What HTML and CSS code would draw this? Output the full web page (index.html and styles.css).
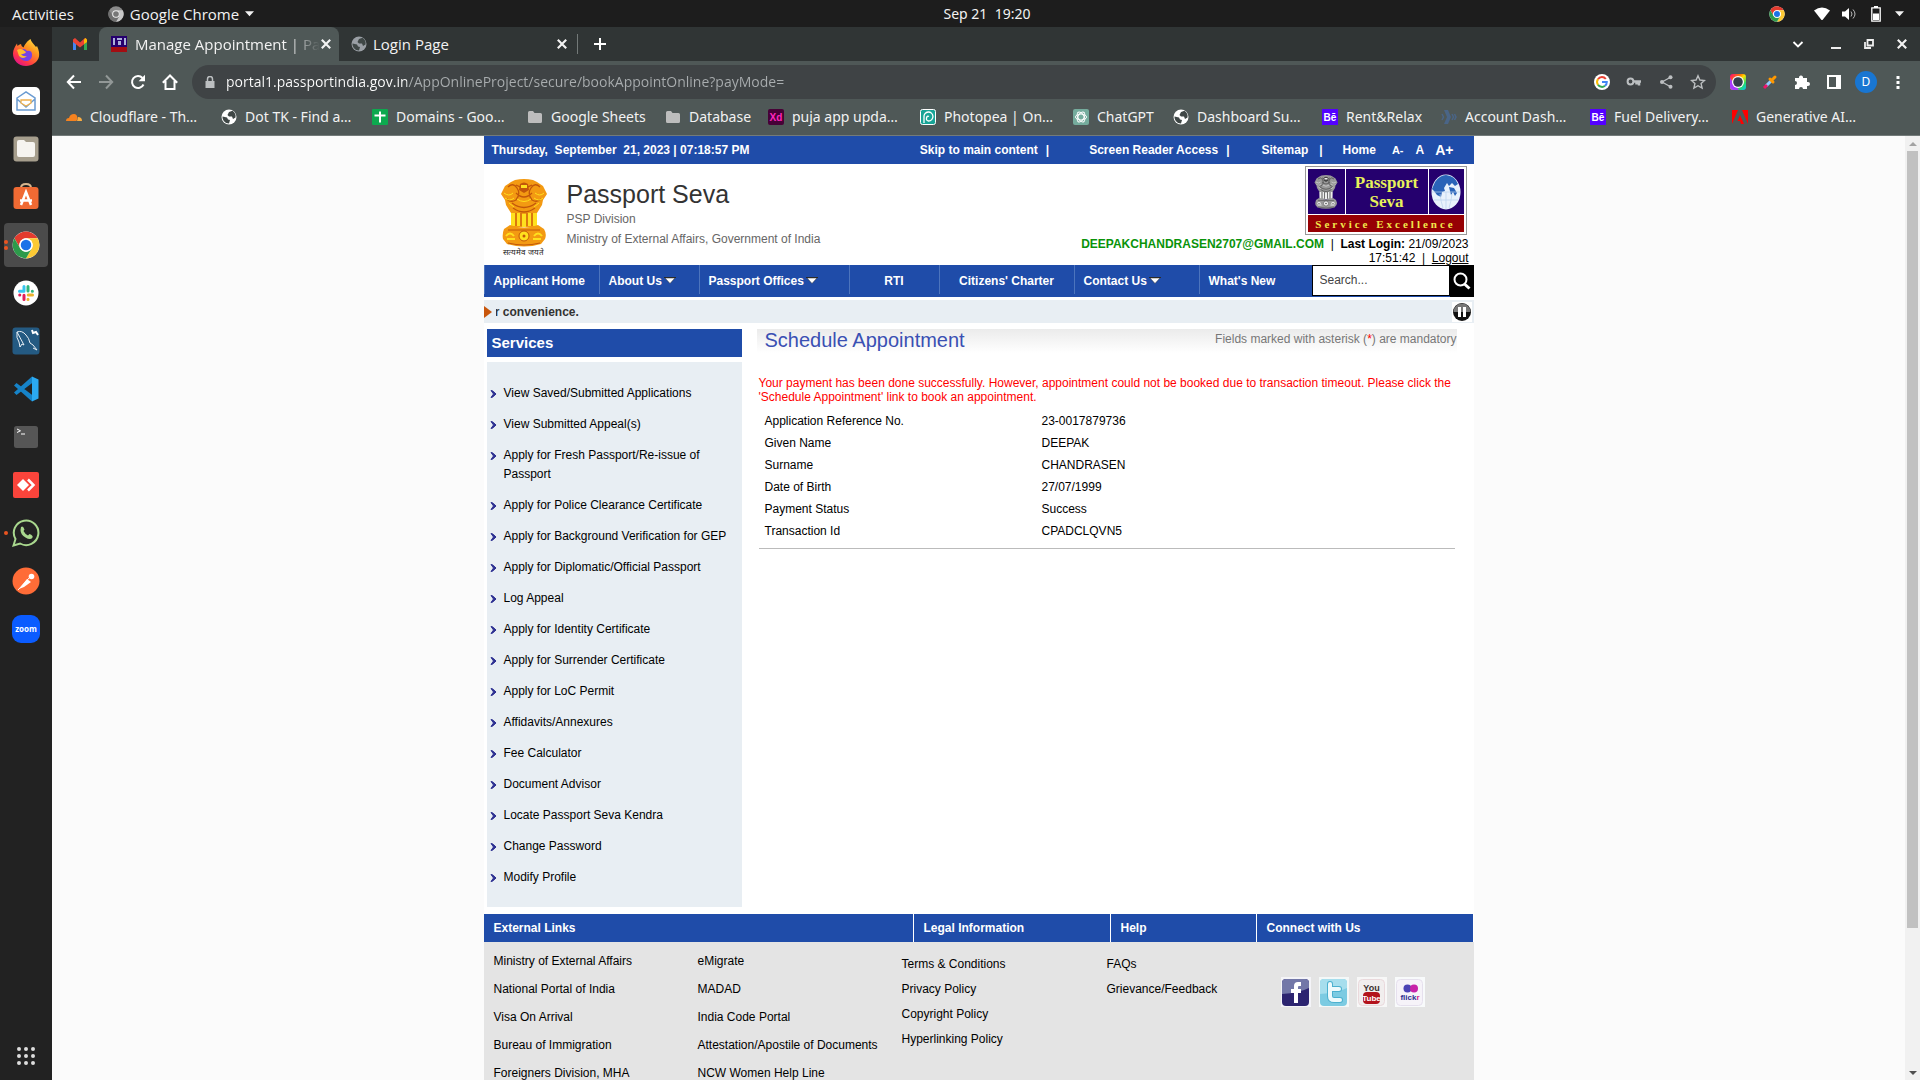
FILE: index.html
```html
<!DOCTYPE html>
<html lang="en">
<head>
<meta charset="utf-8">
<title>Manage Appointment | Passport Seva</title>
<link rel="stylesheet" href="styles.css">
</head>
<body>
<svg class="sprite" aria-hidden="true">
  <symbol id="chrome" viewBox="0 0 48 48">
    <circle cx="24" cy="24" r="23" fill="#fff"/>
    <path d="M4.100 12.500A23 23 0 0 1 43.900 12.500H24A11.500 11.500 0 0 0 14 29.700Z" fill="#e33b2e"/>
    <path d="M43.900 12.500A23 23 0 0 1 24 47L34 29.700A11.500 11.500 0 0 0 24 12.500Z" fill="#fcc934"/>
    <path d="M4.100 12.500A23 23 0 0 0 24 47L34 29.700A11.500 11.500 0 0 1 14 29.700Z" fill="#2d9a4b"/>
    <circle cx="24" cy="24" r="11.500" fill="#fff"/><circle cx="24" cy="24" r="9" fill="#1a73e8"/>
  </symbol>
  <symbol id="chrome-grey" viewBox="0 0 48 48">
    <circle cx="24" cy="24" r="23" fill="#8b8b8b"/>
    <path d="M43.900 12.500A23 23 0 0 1 24 47L34 29.700A11.500 11.500 0 0 0 24 12.500Z" fill="#c9c9c9"/>
    <path d="M4.100 12.500A23 23 0 0 0 24 47L34 29.700A11.500 11.500 0 0 1 14 29.700Z" fill="#707070"/>
    <circle cx="24" cy="24" r="11.500" fill="#eee"/><circle cx="24" cy="24" r="8.500" fill="#777"/>
  </symbol>
  <symbol id="globe" viewBox="0 0 16 16">
    <circle cx="8" cy="8" r="7.500" fill="currentColor"/>
    <path d="M1.500 7.500 6 8.500l1 2 2 .5-1 3.500C4 14.500 1.200 11 1.500 7.500ZM8 3l3.500-1.200C14 3.500 15 6 14.500 8.500L12 10l-1-2.500H8L6.500 6Z" fill="#3f4746"/>
  </symbol>
  <symbol id="folder" viewBox="0 0 16 16"><path d="M1 3.500A1.500 1.500 0 0 1 2.500 2H6l1.500 2h6A1.500 1.500 0 0 1 15 5.500v7a1.500 1.500 0 0 1-1.500 1.500h-11A1.500 1.500 0 0 1 1 12.500Z" fill="#bdbdbd"/></symbol>
  <symbol id="behance" viewBox="0 0 16 16"><path d="M0 0h16v16H0z" fill="#5300ff"/><text x="8" y="12" text-anchor="middle" font-family="Liberation Sans" font-weight="bold" font-size="10" fill="#fff">Bē</text></symbol>
  <symbol id="cross" viewBox="0 0 10 10"><path d="m1.500 1.500 7 7m0-7-7 7" stroke="currentColor" stroke-width="1.800" fill="none"/></symbol>
  <symbol id="caret" viewBox="0 0 10 6"><path d="M0 0h10L5 5.500Z" fill="currentColor"/></symbol>
  <symbol id="nav-caret" viewBox="0 0 12 8"><path d="M0 .5h12" stroke="#2b2b2b"/><path d="M1 1h10L6 6.500Z" fill="#fff" stroke="#2b2b2b" stroke-width=".5"/></symbol>
  <symbol id="bullet" viewBox="0 0 8 8"><path d="M1 .5c2 0 3.500 2 5 3.500-1.500 1.500-3 3.500-5 3.500L3.500 4Z" fill="#2e3192" stroke="#2e3192"/></symbol>
  <symbol id="lions" viewBox="0 0 48 68">
    <path d="M15 1q9-2 18 0l4 2 6 4 4 8-4 6-1 5-5 8-1 14H12L11 34 6 26l-1-5-4-6 4-8 6-4Z" fill="var(--lion)"/>
    <path d="M8 8q5-5 9 1t-1 12q-5 3-9-1m33-12q-5-5-9 1t1 12q5 3 9-1M16 6q8 5 16 0m-16 8q8 8 16 0M12 24q12 9 24 0M13 29q11 8 22 0" fill="none" stroke="var(--lion-dark)" stroke-width="1.300"/>
    <path d="M4 14q5 4 9 0M5 19q5 4 9 0m21-5q5 4 9 0m-10 5q5 4 9 0M17 20q7 5 14 0M9 24l5 4m25-4-5 4" fill="none" stroke="var(--lion-light)"/>
    <path d="M20 5q4-3 8 0l1 6-5 3-5-3Z" fill="var(--lion-dark)"/>
    <path d="M21 6h6v3h-6z" fill="var(--lion-light)"/>
    <path d="M11 34h4v13h-4zM17 34h3v13h-3zM22 35h4v13h-4zM28 34h3v13h-3zM33 34h4v13h-4z" fill="var(--lion-light)"/>
    <path d="M16 34v13m5-13v13m6-13v13m5-13v13" stroke="var(--lion-dark)"/>
    <path d="M10 46q14 5 28 0l6 4q3 5 1 10l-4 5q-17 5-34 0l-4-5q-1-5 1-10Z" fill="var(--lion)"/>
    <path d="M8 51h32M8 64q16 4 32 0" stroke="var(--lion-dark)" fill="none"/>
    <circle cx="24" cy="57" r="5" fill="var(--lion-light)" stroke="var(--lion-dark)"/><circle cx="24" cy="57" r="1.500" fill="var(--lion-dark)"/>
    <path d="M6 57q4-5 8 0m20 0q4-5 8 0M7 60h8m18 0h8" fill="none" stroke="var(--lion-light)" stroke-width="2"/>
  </symbol>
</svg>

<div class="desktop">
  <header class="panel">
    <div class="panel-left">
      <button class="bare">Activities</button>
      <button class="bare app-menu"><svg class="i16"><use href="#chrome-grey"/></svg>Google Chrome<svg class="caret"><use href="#caret"/></svg></button>
    </div>
    <time class="clock">Sep 21&nbsp; 19:20</time>
    <div class="panel-right">
      <svg class="i16 tray-chrome"><use href="#chrome"/></svg>
      <svg class="i16" viewBox="0 0 16 16"><path d="M0 4.500Q8-1.500 16 4.500L8.500 14h-1Z" fill="#fff"/></svg>
      <svg class="i16" viewBox="0 0 16 16"><path d="M1 5.500h3L8 2v12L4 10.500H1Z" fill="#fff"/><path d="M10 5.500q2 2.500 0 5m2-7q4 4.500 0 9" stroke="#bbb" fill="none"/></svg>
      <svg class="i16" viewBox="0 0 16 16"><path d="M6 .5h4M3.800 1.800h8.400v13.400H3.800Z" stroke="#fff" stroke-width="1.300" fill="none"/><path d="M5 7.500h6V14H5z" fill="#fff"/></svg>
      <svg class="caret"><use href="#caret"/></svg>
    </div>
  </header>

  <nav class="dock" aria-label="Applications">
    <button class="dock-item" aria-label="Firefox"><svg viewBox="0 0 28 28"><defs><linearGradient id="ff" x1="1" y1="0" x2=".3" y2="1"><stop offset="0" stop-color="#fff44f"/><stop offset=".4" stop-color="#ff9a1f"/><stop offset=".8" stop-color="#ff3647"/><stop offset="1" stop-color="#e31587"/></linearGradient></defs><path d="M14 27C6 27 1 21 1 14.500 1 11 3 7 5 4.500L5.500 7Q7 5.500 9 5q0 2 2.500 3.500C14 3 17 1 18.500 0 19 3 22 5 24 8l1-1c2 4 2.500 8 2 10.500C26 23 20 27 14 27Z" fill="url(#ff)"/><path d="M7 12q5-4 8 0 5-1 5 4c0 4-3 6-6 6-4 0-7-3-7-7Z" fill="#7542e5"/><path d="M5 11q4-2 7 .5L14 13q-1 2-5 2 2 3 6 2-4 4-8 0Z" fill="#ffbd2e"/></svg></button>
    <button class="dock-item" aria-label="Mail"><svg viewBox="0 0 28 28"><rect width="28" height="28" rx="5" fill="#fff"/><path d="m5 11 9-6 9 6v12H5Zm0 1 9 8 9-8" fill="none" stroke="#6a9bd1" stroke-width="1.500"/><path d="M9 13h10v3l-5 3-5-3Z" fill="#fff" stroke="#efb04c" stroke-width="1.300"/></svg></button>
    <button class="dock-item" aria-label="Files"><svg viewBox="0 0 28 28"><rect x="1.500" y="1.500" width="25" height="25" rx="3" fill="#a69e8d"/><path d="M5 7q0-2 2-2h5l2 2h7q2 0 2 2v11q0 2-2 2H7q-2 0-2-2Z" fill="#f6f4f0"/></svg></button>
    <button class="dock-item" aria-label="Software"><svg viewBox="0 0 28 28"><path d="M9 5q0-4 5-4t5 4" fill="none" stroke="#d8b68e" stroke-width="2"/><rect x="1.500" y="4" width="25" height="22" rx="3" fill="#f06a33"/><path d="m9 22 5-13 5 13M8 17.500h12" stroke="#fff" stroke-width="2.500" fill="none"/></svg></button>
    <button class="dock-item active two" aria-label="Google Chrome"><svg><use href="#chrome"/></svg></button>
    <button class="dock-item" aria-label="Slack"><svg viewBox="0 0 28 28"><circle cx="14" cy="14" r="12.500" fill="#fff"/><g stroke-width="3" stroke-linecap="round"><path d="M12 7.500v4M7.500 12.300H12" stroke="#36c5f0"/><path d="M16 7.500v4.500M20.300 12.200h.1" stroke="#2eb67d"/><path d="M16.200 16h4.300M16 20.300v.1" stroke="#ecb22e"/><path d="M12 16.200v4.300M7.700 16h.1" stroke="#e01e5a"/></g></svg></button>
    <button class="dock-item" aria-label="MySQL Workbench"><svg viewBox="0 0 28 28"><rect x=".5" y=".5" width="27" height="27" rx="3" fill="#245a82"/><path d="M5 5q5-2 9 3 3 3 4 8l3 2 4 5-4-2m-9-3-2-1-2 3-1-5Q4 11 5 5Z" fill="none" stroke="#e8eff5"/><path d="m20 3 1 3 3-1 2 3" stroke="#fff" stroke-width="2" fill="none"/></svg></button>
    <button class="dock-item" aria-label="Visual Studio Code"><svg viewBox="0 0 28 28"><path d="M20 1.500v25L2 10.500 4.500 8l17 13V7l-17 13L2 17.500Z" fill="#1683c8"/><path d="m20 1.500 6.500 3v19l-6.500 3Z" fill="#2ba9f1"/></svg></button>
    <button class="dock-item" aria-label="Terminal"><svg viewBox="0 0 28 28"><rect x="2" y="3" width="24" height="22" rx="2.500" fill="#565656"/><path d="m5 6 3.500 1.800L5 9.500M9 11h4" stroke="#fff" fill="none"/></svg></button>
    <button class="dock-item" aria-label="AnyDesk"><svg viewBox="0 0 28 28"><rect x="1" y="1" width="26" height="26" rx="2" fill="#f9443b"/><path d="m5 14 6-6 6 6-6 6Z" fill="#fff"/><path d="m16 8.500 5.500 5.500-5.500 5.500" stroke="#fff" stroke-width="2.500" fill="none"/></svg></button>
    <button class="dock-item one" aria-label="WhatsApp"><svg viewBox="0 0 28 28"><path d="m1.500 26.500 2-6.500a12.300 12.300 0 1 1 4.600 4.500Z" fill="#222" stroke="#a9d88e" stroke-width="2"/><path d="M9 8q2-2 3.500 2.500L11.500 12q1.500 3 4.500 4.500l1.500-1.500q4 1.500 3 3.500-2 3-7 0T8.500 11Z" fill="#a9d88e"/></svg></button>
    <button class="dock-item" aria-label="Postman"><svg viewBox="0 0 28 28"><circle cx="14" cy="14" r="13.500" fill="#ff6c37"/><path d="M7 22 15 12l4 3-7 5Z" fill="#fff"/><circle cx="19.500" cy="9.500" r="2.800" fill="#fff"/><path d="m6 23 12-13" stroke="#fff"/></svg></button>
    <button class="dock-item" aria-label="Zoom"><svg viewBox="0 0 28 28"><rect width="28" height="28" rx="9" fill="#0b5cff"/><text x="14" y="17" text-anchor="middle" font-family="Open Sans" font-weight="bold" font-size="8" fill="#fff">zoom</text></svg></button>
    <button class="dock-item apps" aria-label="Show applications"><svg viewBox="0 0 28 28"><path d="M7 7h0M14 7h0M21 7h0M7 14h0M14 14h0M21 14h0M7 21h0M14 21h0M21 21h0" stroke="#ddd" stroke-width="4" stroke-linecap="round"/></svg></button>
  </nav>

  <div class="browser">
    <div class="tabs">
      <a class="tab pinned" href="#" aria-label="Gmail"><svg class="i16" viewBox="0 0 16 16"><path d="M1 14V4h3v10Z" fill="#4285f4"/><path d="M12 14V4h3v10Z" fill="#34a853"/><path d="M1 3.500 3 2l5 4.500L13 2l2 1.500V6l-7 5.500L1 6Z" fill="#ea4335"/><path d="M12 3.500 13.500 2 15 3.500V6l-3 2Z" fill="#fbbc04"/></svg></a>
      <div class="tab current"><svg class="i16" viewBox="0 0 16 16"><path d="M0 0h16v11H0z" fill="#26006e"/><path d="M0 11h16v5H0z" fill="#a30d12"/><path d="M2 2h2v7H2zM6 2h5v2H6zM7 5h3v4H7zM13 2h2v7h-2z" fill="#aab0d8"/></svg><span class="tab-title">Manage Appointment | Pa</span><button class="bare" aria-label="Close tab"><svg class="i12"><use href="#cross"/></svg></button></div>
      <div class="tab second"><svg class="i16 dim"><use href="#globe"/></svg><span class="tab-title">Login Page</span><button class="bare" aria-label="Close tab"><svg class="i12"><use href="#cross"/></svg></button></div>
      <button class="bare new-tab" aria-label="New tab"><svg class="i12" viewBox="0 0 12 12"><path d="M6 0v12M0 6h12" stroke="#fff" stroke-width="2"/></svg></button>
      <div class="window-buttons">
        <button class="bare search-tabs" aria-label="Search tabs"><svg class="i12" viewBox="0 0 12 12"><path d="m1.500 4 4.500 4.500L10.500 4" stroke="#fff" stroke-width="1.800" fill="none"/></svg></button>
        <button class="bare" aria-label="Minimise"><svg class="i12" viewBox="0 0 12 12"><path d="M1 10h10" stroke="#eee" stroke-width="2"/></svg></button>
        <button class="bare" aria-label="Restore"><svg class="i12" viewBox="0 0 12 12"><path d="M4.500 2H10v5.500H4.500ZM2 4v6h6" stroke="#eee" stroke-width="1.800" fill="none"/></svg></button>
        <button class="bare" aria-label="Close"><svg class="i12"><use href="#cross"/></svg></button>
      </div>
    </div>

    <div class="toolbar">
      <button class="bare tool" aria-label="Back"><svg class="i16" viewBox="0 0 16 16"><path d="M15 8H2m6-6.500L1.800 8 8 14.500" stroke="#fff" stroke-width="2" fill="none"/></svg></button>
      <button class="bare tool" aria-label="Forward"><svg class="i16" viewBox="0 0 16 16"><path d="M1 8h13M8 1.500 14.200 8 8 14.500" stroke="#929897" stroke-width="2" fill="none"/></svg></button>
      <button class="bare tool" aria-label="Reload"><svg class="i16" viewBox="0 0 16 16"><path d="M13.500 10.500A6 6 0 1 1 12.500 4" stroke="#fff" stroke-width="2" fill="none"/><path d="M15 .8v6.400H8.600Z" fill="#fff"/></svg></button>
      <button class="bare tool" aria-label="Home"><svg class="i16" viewBox="0 0 16 16"><path d="M.8 8.800 8 1.500l7.200 7.300M3.500 7v8h9V7" stroke="#fff" stroke-width="2" fill="none"/></svg></button>
      <div class="omnibox">
        <svg class="i12" viewBox="0 0 12 12"><path d="M1.500 5h9v7h-9z" fill="#bcbfc1"/><path d="M3.500 5V3a2.500 2.500 0 0 1 5 0v2" stroke="#bcbfc1" stroke-width="1.500" fill="none"/></svg>
        <input class="url" type="text" aria-label="Address" value="portal1.passportindia.gov.in/AppOnlineProject/secure/bookAppointOnline?payMode=">
        <button class="bare tool" aria-label="Google"><svg class="i16" viewBox="0 0 16 16"><circle cx="8" cy="8" r="8" fill="#fff"/><g fill="none" stroke-width="2"><path d="M11.800 5A4.800 4.800 0 0 0 4 5.200" stroke="#ea4335"/><path d="M4 5.200a4.800 4.800 0 0 0 0 5.600" stroke="#fbbc04"/><path d="M4 10.800a4.800 4.800 0 0 0 7 1" stroke="#34a853"/><path d="M11 11.800A4.800 4.800 0 0 0 12.800 8H8" stroke="#4285f4"/></g></svg></button>
        <button class="bare tool" aria-label="Passwords"><svg class="i16" viewBox="0 0 16 16"><circle cx="4.500" cy="7.500" r="2.900" stroke="#bcbfc1" stroke-width="2" fill="none"/><path d="M7 7.500h8M13 7.500v4M10.500 7.500v3" stroke="#bcbfc1" stroke-width="2.500"/></svg></button>
        <button class="bare tool" aria-label="Share"><svg class="i16" viewBox="0 0 16 16"><path d="M13 3 4 8l9 5" stroke="#bcbfc1" stroke-width="1.300" fill="none"/><g fill="#bcbfc1"><circle cx="12.500" cy="3.200" r="2"/><circle cx="4" cy="8" r="2"/><circle cx="12.500" cy="12.800" r="2"/></g></svg></button>
        <button class="bare tool" aria-label="Bookmark"><svg class="i16" viewBox="0 0 16 16"><path d="m8 1.800 1.900 4.200 4.600.5-3.400 3.100 1 4.500L8 11.700l-4.100 2.400 1-4.500L1.500 6.500 6.100 6Z" stroke="#bcbfc1" stroke-width="1.400" fill="none"/></svg></button>
      </div>
      <button class="bare tool" aria-label="Camera extension"><svg class="i16" viewBox="0 0 16 16"><defs><linearGradient id="cam" x1="0" y1="0" x2="1" y2="1"><stop offset="0" stop-color="#ff0080"/><stop offset=".35" stop-color="#ff7a00"/><stop offset=".5" stop-color="#ffe100"/><stop offset=".75" stop-color="#28d86a"/><stop offset="1" stop-color="#00c2ff"/></linearGradient></defs><rect width="16" height="16" rx="3" fill="url(#cam)"/><path d="M0 4v9q0 3 3 3h6Z" fill="#a83cff"/><circle cx="8" cy="8" r="6" fill="#fff"/><circle cx="8" cy="8" r="4.800" fill="#333d4d"/></svg></button>
      <button class="bare tool" aria-label="Colour picker"><svg class="i16" viewBox="0 0 16 16"><path d="m4 12 5-5" stroke="#8ec9ff" stroke-width="3"/><path d="m2 14 3-3" stroke="#f0146c" stroke-width="3"/><path d="m8 5 3 3M9.500 6.500 13 3" stroke="#ff9800" stroke-width="3" stroke-linecap="round"/></svg></button>
      <button class="bare tool" aria-label="Extensions"><svg class="i16" viewBox="0 0 16 16"><path d="M1 4h4a2 2 0 1 1 4-1v1h4v4h1a2 2 0 0 1 0 4h-1v3H9a2 2 0 0 0-4 0H1v-4a2 2 0 0 0 0-4Z" fill="#fff"/></svg></button>
      <button class="bare tool" aria-label="Side panel"><svg class="i16" viewBox="0 0 16 16"><path d="M2 2h12v12H2Z" stroke="#fff" stroke-width="2" fill="none"/><path d="M10 2h4v12h-4z" fill="#fff"/></svg></button>
      <button class="bare tool" aria-label="Profile"><span class="avatar">D</span></button>
      <button class="bare tool" aria-label="Menu"><svg class="i16" viewBox="0 0 16 16"><path d="M6.500 2h3v3h-3zM6.500 7h3v3h-3zM6.500 12h3v3h-3z" fill="#fff"/></svg></button>
    </div>

    <div class="bookmarks">
      <a href="#"><svg class="i16" viewBox="0 0 16 16"><path d="M0 12q0-3 3-3 1-4 5-4 3 0 3.500 4l-1 3Z" fill="#f6821f"/><path d="M11 12l1-4q4 0 4 4Z" fill="#fbad41"/></svg>Cloudflare - Th…</a>
      <a href="#"><svg class="i16 bright"><use href="#globe"/></svg>Dot TK - Find a…</a>
      <a href="#"><svg class="i16" viewBox="0 0 16 16"><rect width="16" height="16" rx="1" fill="#0da94f"/><path d="M8 2.500v11M2.500 6.500h11" stroke="#fff" stroke-width="2"/></svg>Domains - Goo…</a>
      <a href="#"><svg class="i16"><use href="#folder"/></svg>Google Sheets</a>
      <a href="#"><svg class="i16"><use href="#folder"/></svg>Database</a>
      <a href="#"><svg class="i16" viewBox="0 0 16 16"><rect width="16" height="16" rx="2" fill="#470137"/><text x="8" y="12" text-anchor="middle" font-family="Liberation Sans" font-weight="bold" font-size="10" fill="#ff26be">Xd</text></svg>puja app upda…</a>
      <a href="#"><svg class="i16" viewBox="0 0 16 16"><rect x=".5" y=".5" width="15" height="15" rx="2" fill="#18a497" stroke="#fff"/><path d="M4 14V8a4.500 4.500 0 1 1 4.500 4q-2.500-.5-2-3t2.500-1.500" stroke="#fff" stroke-width="1.300" fill="none"/></svg>Photopea | On…</a>
      <a href="#"><svg class="i16" viewBox="0 0 16 16"><rect width="16" height="16" rx="2" fill="#75ac9d"/><g fill="none" stroke="#fff"><ellipse cx="8" cy="8" rx="5.500" ry="3"/><ellipse cx="8" cy="8" rx="5.500" ry="3" transform="rotate(60 8 8)"/><ellipse cx="8" cy="8" rx="5.500" ry="3" transform="rotate(120 8 8)"/></g></svg>ChatGPT</a>
      <a href="#"><svg class="i16 bright"><use href="#globe"/></svg>Dashboard Su…</a>
      <a href="#"><svg class="i16"><use href="#behance"/></svg>Rent&amp;Relax</a>
      <a href="#"><svg class="i16" viewBox="0 0 16 16"><path d="M3 1h4l3 7-3 7H3l3-7Z" fill="#4a6587"/><path d="m1 5 1.500 3L1 11m10-6 1.500 3-1.500 3m2.500-6L15 8l-1.500 3" stroke="#4a6587" stroke-width="1.500" fill="none"/></svg>Account Dash…</a>
      <a href="#"><svg class="i16"><use href="#behance"/></svg>Fuel Delivery…</a>
      <a href="#"><svg class="i16" viewBox="0 0 16 16"><path d="M0 1h6L0 15ZM10 1h6v14ZM8 6l4 9H9l-1-3H5.500Z" fill="#f00"/></svg>Generative AI…</a>
    </div>

    <div class="viewport">
      <main class="portal">
        <div class="topline">
          <span class="today">Thursday,&nbsp; September&nbsp; 21, 2023 | 07:18:57 PM</span>
          <a class="skip" href="#content">Skip to main content</a><span>|</span>
          <a class="reader" href="#">Screen Reader Access</a><span>|</span>
          <a class="sitemap" href="#">Sitemap</a><span>|</span>
          <a class="home" href="#">Home</a>
          <button class="bare size-small">A-</button><button class="bare size-normal">A</button><button class="bare size-large">A+</button>
        </div>

        <div class="masthead">
          <div class="emblem"><svg><use href="#lions"/></svg><span>सत्यमेव जयते</span></div>
          <div class="brand">
            <h1>Passport Seva</h1>
            <p>PSP Division</p>
            <p>Ministry of External Affairs, Government of India</p>
          </div>
          <div class="account">
            <div class="logo">
              <div class="logo-emblem"><svg><use href="#lions"/></svg></div>
              <div class="logo-name">Passport<br>Seva</div>
              <div class="logo-globe"><svg viewBox="0 0 30 36"><ellipse cx="15" cy="18" rx="14.500" ry="17.500" fill="#e9f2fc"/><path d="M4 8Q9 1 15 1q9 1 12 9l-3 2-3-3-3 3-2-3-3 5 1 3-3 1-1 5-4-2-3-4-2-2Z" fill="#2a63b8"/><path d="m18 13 5 1 3 5-2 3-2-4-2 3Z" fill="#2a63b8"/><path d="M1 18h28M3 26h24M15 18v17M9 20q1 8 3 14m9-14q-1 8-3 14" stroke="#b9d1ec" stroke-width=".7" fill="none"/></svg></div>
              <div class="logo-motto">Service Excellence</div>
            </div>
            <div class="session"><b class="email">DEEPAKCHANDRASEN2707@GMAIL.COM</b>&nbsp; |&nbsp; <b>Last Login:</b> 21/09/2023<br>17:51:42&nbsp; |&nbsp; <a href="#">Logout</a></div>
          </div>
        </div>

        <nav class="menu">
          <a class="w-home" href="#">Applicant Home</a>
          <a class="w-about" href="#">About Us <svg><use href="#nav-caret"/></svg></a>
          <a class="w-offices" href="#">Passport Offices <svg><use href="#nav-caret"/></svg></a>
          <a class="w-rti" href="#">RTI</a>
          <a class="w-charter" href="#">Citizens' Charter</a>
          <a class="w-contact" href="#">Contact Us <svg><use href="#nav-caret"/></svg></a>
          <a class="w-news" href="#">What's New</a>
          <form class="search"><input type="text" aria-label="Search" value="Search..."><button type="button" aria-label="Search"><svg class="i18" viewBox="0 0 18 18"><circle cx="7.500" cy="7.500" r="6" stroke="#fff" stroke-width="2" fill="none"/><path d="m11.500 12 5 4.500" stroke="#fff" stroke-width="3"/></svg></button></form>
        </nav>

        <div class="ticker">
          <svg class="marker" viewBox="0 0 8 12"><path d="M0 0v12l8-6Z" fill="#c8560c"/></svg>
          <div class="news"><span class="cut">r</span>&nbsp;convenience.</div>
          <button class="bare pause" aria-label="Pause"><svg class="i20" viewBox="0 0 20 20"><path d="M0 0h20v20H0z" fill="#fff"/><circle cx="10" cy="10" r="9" fill="#111"/><path d="M1.500 10a8.500 8.500 0 0 1 17 0Z" fill="#777"/><path d="M6 5h3v10H6zM11 5h3v10h-3z" fill="#fff"/></svg></button>
        </div>

        <div class="columns">
          <aside class="services">
            <h2>Services</h2>
            <ul>
              <li><svg><use href="#bullet"/></svg><a href="#">View Saved/Submitted Applications</a></li>
              <li><svg><use href="#bullet"/></svg><a href="#">View Submitted Appeal(s)</a></li>
              <li><svg><use href="#bullet"/></svg><a href="#">Apply for Fresh Passport/Re-issue of Passport</a></li>
              <li><svg><use href="#bullet"/></svg><a href="#">Apply for Police Clearance Certificate</a></li>
              <li><svg><use href="#bullet"/></svg><a href="#">Apply for Background Verification for GEP</a></li>
              <li><svg><use href="#bullet"/></svg><a href="#">Apply for Diplomatic/Official Passport</a></li>
              <li><svg><use href="#bullet"/></svg><a href="#">Log Appeal</a></li>
              <li><svg><use href="#bullet"/></svg><a href="#">Apply for Identity Certificate</a></li>
              <li><svg><use href="#bullet"/></svg><a href="#">Apply for Surrender Certificate</a></li>
              <li><svg><use href="#bullet"/></svg><a href="#">Apply for LoC Permit</a></li>
              <li><svg><use href="#bullet"/></svg><a href="#">Affidavits/Annexures</a></li>
              <li><svg><use href="#bullet"/></svg><a href="#">Fee Calculator</a></li>
              <li><svg><use href="#bullet"/></svg><a href="#">Document Advisor</a></li>
              <li><svg><use href="#bullet"/></svg><a href="#">Locate Passport Seva Kendra</a></li>
              <li><svg><use href="#bullet"/></svg><a href="#">Change Password</a></li>
              <li><svg><use href="#bullet"/></svg><a href="#">Modify Profile</a></li>
            </ul>
          </aside>
          <section class="content" id="content">
            <div class="heading"><h2>Schedule Appointment</h2><p>Fields marked with asterisk (<span class="required">*</span>) are mandatory</p></div>
            <p class="alert">Your payment has been done successfully. However, appointment could not be booked due to transaction timeout. Please click the 'Schedule Appointment' link to book an appointment.</p>
            <table class="details">
              <tr><th scope="row">Application Reference No.</th><td>23-0017879736</td></tr>
              <tr><th scope="row">Given Name</th><td>DEEPAK</td></tr>
              <tr><th scope="row">Surname</th><td>CHANDRASEN</td></tr>
              <tr><th scope="row">Date of Birth</th><td>27/07/1999</td></tr>
              <tr><th scope="row">Payment Status</th><td>Success</td></tr>
              <tr><th scope="row">Transaction Id</th><td>CPADCLQVN5</td></tr>
            </table>
          </section>
        </div>

        <footer class="footer">
          <div class="footer-heads"><h3>External Links</h3><h3>Legal Information</h3><h3>Help</h3><h3>Connect with Us</h3></div>
          <div class="footer-links">
            <ul class="external"><li><a href="#">Ministry of External Affairs</a></li><li><a href="#">National Portal of India</a></li><li><a href="#">Visa On Arrival</a></li><li><a href="#">Bureau of Immigration</a></li><li><a href="#">Foreigners Division, MHA</a></li></ul>
            <ul class="external"><li><a href="#">eMigrate</a></li><li><a href="#">MADAD</a></li><li><a href="#">India Code Portal</a></li><li><a href="#">Attestation/Apostile of Documents</a></li><li><a href="#">NCW Women Help Line</a></li></ul>
            <ul><li><a href="#">Terms &amp; Conditions</a></li><li><a href="#">Privacy Policy</a></li><li><a href="#">Copyright Policy</a></li><li><a href="#">Hyperlinking Policy</a></li></ul>
            <ul><li><a href="#">FAQs</a></li><li><a href="#">Grievance/Feedback</a></li></ul>
            <div class="social">
              <a href="#" aria-label="Facebook"><svg viewBox="0 0 30 30"><path d="M0 0h30v30H0z" fill="#f4f4f8"/><rect x="1" y="2" width="27" height="27" rx="4" fill="#2c2470"/><path d="M1 17V6q0-4 4-4h19q4 0 4 4v5q-10 5-27 6Z" fill="#7277a8"/><path d="M20 5h-3q-4 0-4 4v3h-3v4h3v10h4V16h3v-4h-3v-2q0-1 1-1h2Z" fill="#fff"/></svg></a>
              <a href="#" aria-label="Twitter"><svg viewBox="0 0 30 30"><path d="M0 0h30v30H0z" fill="#f4f8f8"/><rect x="1" y="2" width="27" height="27" rx="4" fill="#7ccbe2"/><path d="M1 17V6q0-4 4-4h19q4 0 4 4v5q-10 5-27 6Z" fill="#a6deed"/><path d="M11 7v12q0 4 4 4h6m-9-11h8" stroke="#4bb0cf" stroke-width="6" stroke-linecap="round" fill="none"/><path d="M11 7v12q0 4 4 4h6m-9-11h8" stroke="#eefafc" stroke-width="4" stroke-linecap="round" fill="none"/></svg></a>
              <a href="#" aria-label="YouTube"><svg viewBox="0 0 30 30"><path d="M0 0h30v30H0z" fill="#f7f7f7"/><rect x="1.500" y="2.500" width="26" height="26" rx="4" fill="#f1eeee" stroke="#ead9dc"/><text x="14.500" y="14" text-anchor="middle" font-family="Liberation Sans Narrow, Liberation Sans" font-weight="bold" font-size="9" fill="#3b322e">You</text><rect x="6" y="15" width="17" height="12" rx="4" fill="#b3121b"/><text x="14.500" y="24" text-anchor="middle" font-family="Liberation Sans Narrow, Liberation Sans" font-weight="bold" font-size="8" fill="#fff">Tube</text></svg></a>
              <a href="#" aria-label="Flickr"><svg viewBox="0 0 30 30"><path d="M0 0h30v30H0z" fill="#f8fafb"/><rect x="1.500" y="2.500" width="26" height="26" rx="4" fill="#f6f3f9" stroke="#e6e0ee"/><circle cx="12.500" cy="11.500" r="4" fill="#4b43b5"/><circle cx="19" cy="11.500" r="4" fill="#c722a8"/><text x="15" y="23" text-anchor="middle" font-family="Liberation Sans" font-weight="bold" font-size="8" fill="#2a2f8f">flick<tspan fill="#d61b8c">r</tspan></text></svg></a>
            </div>
          </div>
        </footer>
      </main>
      <div class="scrollbar"><svg class="arrow" viewBox="0 0 8 4"><path d="M0 4h8L4 0Z" fill="#a3a3a3"/></svg><div class="thumb"></div><svg class="arrow" viewBox="0 0 8 4"><path d="M0 0h8L4 4Z" fill="#505050"/></svg></div>
    </div>
  </div>
</div>
</body>
</html>
```

FILE: styles.css
```css
* { box-sizing: border-box; }
html, body { margin: 0; height: 100%; overflow: hidden; }
h1, h2, h3, p, ul { margin: 0; padding: 0; font-weight: normal; }
ul { list-style: none; }
a { color: inherit; text-decoration: none; }
svg { display: block; flex: none; }
.sprite { display: none; }
.bare { border: 0; background: none; padding: 0; margin: 0; font: inherit; color: inherit; }
.i12 { width: 12px; height: 12px; }
.i16 { width: 16px; height: 16px; }
.i18 { width: 18px; height: 18px; }
.i20 { width: 20px; height: 20px; }
.caret { width: 9px; height: 6px; }

/* Desktop shell */
.desktop {
  display: grid; grid-template: 27px minmax(0, 1fr) / 52px minmax(0, 1fr);
  height: 100vh; background: #222; color: #f2f2f2;
  font: 14px/20px "Noto Sans", sans-serif;
}
.panel { grid-column: 1 / 3; display: grid; grid-template-columns: 1fr auto 1fr; align-items: center; padding: 0 16px 0 12px; background: #1d1d1d; }
.panel-left, .app-menu { display: flex; align-items: center; }
.panel-left { gap: 34px; font-family: "Open Sans", sans-serif; font-size: 15px; }
.app-menu { gap: 6px; }
.clock { padding-left: 58px; }
.panel-right { display: flex; align-items: center; justify-content: flex-end; gap: 11px; }
.tray-chrome { margin-right: 18px; }

.dock { display: flex; flex-direction: column; align-items: center; padding: 2px 0 0; background: #222; }
.dock-item { position: relative; display: grid; place-items: center; width: 44px; height: 44px; margin: 2px 0; padding: 0; border: 0; border-radius: 4px; background: none; }
.dock-item svg { width: 28px; height: 28px; }
.dock-item.active { background: #4b4b4b; }
.dock-item.one::before, .dock-item.two::before { content: ""; position: absolute; left: 0; top: 20px; width: 4px; height: 4px; border-radius: 50%; background: #e95420; }
.dock-item.two::before { top: 17px; box-shadow: 0 6px #e95420; }
.apps { margin-top: auto; }

/* Browser chrome */
.browser { display: flex; flex-direction: column; min-width: 0; background: #4f5857; }
.tabs { display: flex; align-items: stretch; height: 34px; background: #303535; font-family: "Open Sans", sans-serif; font-size: 15px; }
.tab { display: flex; align-items: center; }
.pinned { width: 47px; padding-left: 20px; }
.pinned, .second { background: #303535; }
.current { width: 240px; padding: 0 10px 0 12px; border-radius: 8px 8px 0 0; background: #4f5857; }
.second { width: 239px; padding: 0 9px 0 12px; border-right: 1px solid #6b7271; border-image: linear-gradient(#303535 22%, #737978 22% 78%, #303535 78%) 1; }
.tab-title { flex: 1; margin-left: 8px; white-space: nowrap; }
.current .tab-title { mask-image: linear-gradient(90deg, #000 82%, transparent); }
.second .tab-title { margin-left: 6px; }
.dim { color: #9a9fa5; }
.bright { color: #fff; }
.new-tab { padding: 0 16px; }
.window-buttons { display: flex; align-items: center; gap: 21px; margin-left: auto; padding-right: 12px; }
.search-tabs { margin-right: 5px; }

.toolbar { display: flex; align-items: center; height: 42px; padding: 0 6px; }
.tool { display: grid; place-items: center; flex: none; width: 32px; height: 32px; }
.omnibox { display: flex; flex: 1; align-items: center; height: 34px; margin: 0 6px; padding: 0 2px 0 12px; border-radius: 17px; background: #3f4345; }
.url {
  flex: 1; min-width: 0; margin-left: 10px; padding: 0; border: 0; outline: 0;
  font: 14px/20px "Open Sans", sans-serif; color: transparent;
  background: linear-gradient(90deg, #fff 181px, #a9adaf 181px) text;
}
.avatar { display: grid; place-items: center; width: 22px; height: 22px; border-radius: 50%; background: #1976d2; font-size: 12px; color: #fff; }

.bookmarks {
  display: grid; grid-template-columns: 155fr 151fr 155fr 138fr 103fr 152fr 153fr 100fr 149fr 119fr 149fr 142fr 188fr;
  align-items: center; height: 33px; padding: 0 0 4px 14px; border-bottom: 1px solid #737b7a;
}
.bookmarks a { display: flex; align-items: center; gap: 8px; white-space: nowrap; }

/* Portal page */
.viewport { display: flex; flex: 1; min-height: 0; background: #fbfbfb; color: #000; font: 12px/14px "Liberation Sans", Arial, sans-serif; }
.portal { flex: 0 1 990px; margin: 0 auto; overflow: hidden; background: #fff; }
.scrollbar { display: flex; flex-direction: column; align-items: center; width: 15px; padding: 6px 2px 5px; background: #f1f1f1; }
.scrollbar .arrow { width: 8px; height: 4px; }
.thumb { flex: 1; width: 11px; margin: 5px 0 143px; background: #c1c1c1; }

.topline { display: flex; align-items: center; height: 28px; padding: 0 20px 0 8px; background: #1f4ca9; color: #fff; font-weight: bold; }
.today { margin-right: auto; }
.skip, .reader { margin-right: 8px; }
.reader { margin-left: 40px; }
.sitemap { margin: 0 11px 0 32px; }
.home { margin: 0 16px 0 20px; }
.size-small { font-size: 11px; }
.size-normal { margin: 0 11px 0 12px; }
.size-large { font-size: 14px; }

.masthead { display: flex; height: 101px; padding: 2px 5px 0 16px; }
.emblem { --lion: #f39a12; --lion-dark: #c2570a; --lion-light: #ffe01e; width: 48px; margin: 13px 19px 0 0; text-align: center; }
.emblem svg { width: 48px; height: 68px; }
.emblem span { display: block; font-size: 8px; line-height: 12px; white-space: nowrap; color: #222; }
.brand { padding-top: 13px; line-height: 20px; color: #666; }
.brand h1 { font-size: 25px; line-height: 30px; color: #333; }
.account { display: flex; flex-direction: column; align-items: flex-end; margin-left: auto; }
.logo { display: grid; grid-template: 45px 17px / 37px 82px 1fr; gap: 1px; width: 162px; height: 69px; padding: 2px; margin-right: 2px; border: 1px solid #999; background: #fff; }
.logo > div { display: grid; place-items: center; background: #25006e; }
.logo-emblem { --lion: #999; --lion-dark: #444; --lion-light: #eee; }
.logo-emblem svg { width: 24px; height: 36px; }
.logo-globe svg { width: 30px; height: 36px; }
.logo .logo-name { font: bold 17px/19px "Liberation Serif", serif; text-align: center; color: #e8f25a; }
.logo .logo-motto { grid-column: 1 / 4; background: #960004; color: #f2e84b; font: bold 11px/14px "Liberation Serif", serif; letter-spacing: 3px; }
.session { margin-top: 2px; text-align: right; }
.session a { text-decoration: underline; }
.email { color: #0a930a; }

.menu { display: flex; height: 32px; background: #1f4ca9; color: #fff; font-weight: bold; }
.menu > a { display: flex; align-items: center; gap: 2px; height: 29px; padding: 2px 0 0 9px; border-left: 1px solid #4c74bd; white-space: nowrap; }
.menu > a svg { width: 12px; height: 8px; }
.w-home { flex: 1 1 115px; }
.w-about { flex: 1 1 100px; }
.w-offices { flex: 1 1 150px; }
.w-rti { flex: 1 1 90px; }
.w-charter { flex: 1 1 135px; }
.w-contact { flex: 1 1 125px; }
.w-news { flex: 1 1 113px; }
.menu .w-rti, .menu .w-charter { justify-content: center; padding-left: 0; }
.search { display: flex; width: 162px; }
.search input { flex: 1; min-width: 0; height: 31px; padding: 0 7px 2px; border: 1px solid #000; font: inherit; font-weight: normal; color: #444; background: #fff; }
.search button { display: grid; place-items: center; width: 24px; padding: 0; border: 0; background: #000; }

.ticker { display: flex; align-items: center; height: 23px; margin-top: 3px; background: #e8eef3; color: #333; font-weight: bold; }
.marker { width: 8px; height: 12px; }
.news { display: flex; flex: 1; padding-left: 4px; }
.cut { width: 4px; overflow: hidden; direction: rtl; }
.pause { margin-right: 2px; }

.columns { display: flex; gap: 15px; padding: 6px 17px 7px 3px; }
.services { flex: none; width: 255px; }
.services h2 { padding: 4px 5px; margin-bottom: 5px; background: #1f4ca9; color: #fff; font-size: 15px; line-height: 20px; font-weight: bold; }
.services ul { display: flex; flex-direction: column; gap: 12px; padding: 22px 0 20px 3px; background: #e8eef3; line-height: 19px; }
.services li { display: flex; gap: 6px; }
.services li svg { width: 8px; height: 8px; margin-top: 6px; }
.content { flex: 1; }
.heading { display: flex; justify-content: space-between; height: 24px; padding-left: 8px; background: linear-gradient(#ebebeb, #fff); color: #777; line-height: 20px; }
.heading h2 { font-size: 20px; line-height: 22px; color: #3a50b3; }
.required { color: #f00; }
.alert { margin: 23px 2px 6px; color: #f00; }
.details { width: 696px; margin-left: 2px; border-spacing: 0; border-bottom: 1px solid #bbb; }
.details th, .details td { padding: 4px 6px; font-weight: normal; text-align: left; }
.details th { width: 277px; }
.details tr:last-child > * { padding-bottom: 10px; }

.footer { background: #e4e4e4; }
.footer-heads { display: grid; grid-template-columns: 429fr 196fr 145fr 216fr; gap: 1px; border-right: 1px solid #fff; background: #fff; color: #fff; }
.footer-heads h3 { padding: 7px 10px; background: #1f4ca9; font-size: 12px; font-weight: bold; }
.footer-links { display: grid; grid-template-columns: 204fr 204fr 205fr 174fr 193fr; padding: 10px 0 14px 10px; }
.footer-links ul { line-height: 25px; }
.footer-links .external { line-height: 28px; margin-top: -5px; }
.social { display: flex; gap: 8px; padding: 25px 0; }
.social svg { width: 30px; height: 30px; }
```
